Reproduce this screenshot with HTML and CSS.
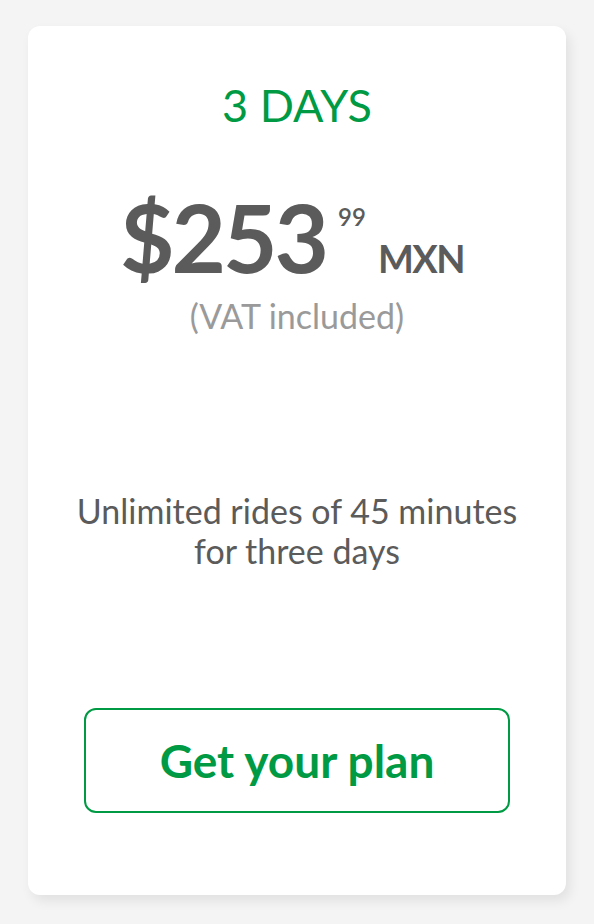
FILE: index.html
```html
<!DOCTYPE html>
<html lang="en">
<head>
<meta charset="utf-8">
<title>3 Days plan</title>
<link rel="stylesheet" href="styles.css">
</head>
<body>
<div class="card">
  <h2 class="plan-name">3 DAYS</h2>
  <div class="price"><span class="amount">$253</span><span class="cents">99</span><span class="currency">MXN</span></div>
  <p class="vat">(VAT included)</p>
  <p class="desc">Unlimited rides of 45 minutes<br>for three days</p>
  <button class="cta">Get your plan</button>
</div>
</body>
</html>
```
FILE: styles.css
```css
* { box-sizing: border-box; }
html, body { margin: 0; padding: 0; }
body {
  background: #f4f4f4;
  font-family: Lato, "Open Sans", sans-serif;
  width: 594px;
  height: 924px;
  padding: 26px 28px 0 28px;
}
.card {
  background: #ffffff;
  border-radius: 12px;
  height: 869px;
  width: 538px;
  box-shadow: 4px 6px 12px rgba(0,0,0,0.08);
  display: flex;
  flex-direction: column;
  align-items: center;
  padding: 52px 20px 0 20px;
}
.plan-name {
  margin: 0;
  font-weight: 400;
  font-size: 45px;
  line-height: 54px;
  color: #009a44;
}
.price {
  margin-top: 48px;
  color: #5b5b5b;
  font-weight: 700;
  white-space: nowrap;
  line-height: normal;
  margin-right: 10px;
}
.amount {
  font-size: 94px;
  letter-spacing: -3px;
}
.cents {
  font-size: 24px;
  font-weight: 600;
  vertical-align: 47px;
  margin-left: 12px;
}
.currency {
  font-size: 38px;
  letter-spacing: -1.5px;
  margin-left: 12px;
}
.vat {
  margin: 2px 0 0 0;
  font-size: 34px;
  line-height: normal;
  color: #9a9a9a;
}
.desc {
  margin: 155px 0 0 0;
  text-align: center;
  font-size: 34px;
  line-height: 40px;
  color: #5b5b5b;
  white-space: nowrap;
}
.cta {
  margin-top: 137px;
  width: 426px;
  height: 105px;
  padding: 0;
  background: #ffffff;
  border: 2px solid #009a44;
  border-radius: 12px;
  color: #009a44;
  font-family: inherit;
  font-size: 46px;
  font-weight: 700;
  cursor: pointer;
}
```
